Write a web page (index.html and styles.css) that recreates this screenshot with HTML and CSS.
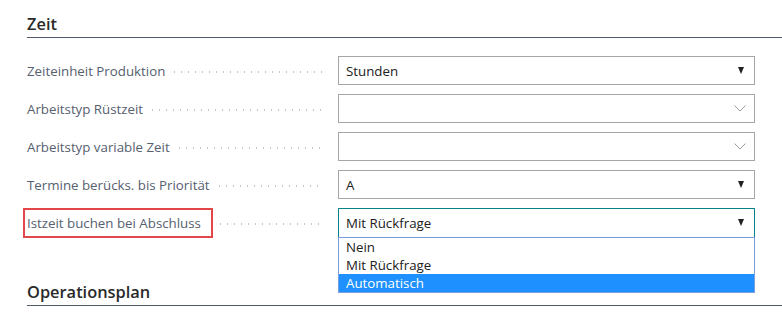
FILE: index.html
```html
<!DOCTYPE html>
<html lang="de">
<head>
    <meta charset="UTF-8">
    <title>Zeit</title>
    <link rel="stylesheet" href="styles.css">
</head>
<body>
    <div class="page">
        <section class="group">
            <h2 class="group-title">Zeit</h2>
            <div class="field-row">
                <label class="field-label"><span>Zeiteinheit Produktion</span></label>
                <div class="field-box">
                    <span class="field-value">Stunden</span>
                    <span class="arrow-solid"></span>
                </div>
            </div>
            <div class="field-row">
                <label class="field-label"><span>Arbeitstyp Rüstzeit</span></label>
                <div class="field-box">
                    <span class="field-value"></span>
                    <svg class="chevron" width="12" height="7" viewBox="0 0 12 7"><path d="M0.5 0.5 L6 6 L11.5 0.5" fill="none" stroke="#9a9a9a" stroke-width="1"/></svg>
                </div>
            </div>
            <div class="field-row">
                <label class="field-label"><span>Arbeitstyp variable Zeit</span></label>
                <div class="field-box">
                    <span class="field-value"></span>
                    <svg class="chevron" width="12" height="7" viewBox="0 0 12 7"><path d="M0.5 0.5 L6 6 L11.5 0.5" fill="none" stroke="#9a9a9a" stroke-width="1"/></svg>
                </div>
            </div>
            <div class="field-row">
                <label class="field-label"><span>Termine berücks. bis Priorität</span></label>
                <div class="field-box">
                    <span class="field-value">A</span>
                    <span class="arrow-solid"></span>
                </div>
            </div>
            <div class="field-row">
                <label class="field-label"><span class="marked">Istzeit buchen bei Abschluss</span></label>
                <div class="field-box is-open">
                    <span class="field-value">Mit Rückfrage</span>
                    <span class="arrow-solid"></span>
                    <ul class="option-list">
                        <li>Nein</li>
                        <li>Mit Rückfrage</li>
                        <li class="selected">Automatisch</li>
                    </ul>
                </div>
            </div>
        </section>
        <section class="group next">
            <h2 class="group-title">Operationsplan</h2>
        </section>
    </div>
</body>
</html>
```

FILE: styles.css
```css
body {
    margin: 0;
    background: #ffffff;
    font-family: "Open Sans", "Noto Sans", sans-serif;
    overflow: hidden;
}

.page {
    padding: 11px 0 0 27px;
}

.group-title {
    margin: 0;
    font-size: 16.4px;
    font-weight: 600;
    color: #2a2a2a;
    line-height: 25px;
    padding-bottom: 1px;
    border-bottom: 1px solid #505a66;
}

.group > .field-row:first-of-type {
    margin-top: 18px;
}

.field-row {
    display: flex;
    align-items: center;
    height: 29px;
    margin-bottom: 9px;
}

.field-label {
    width: 311px;
    flex: none;
    font-size: 13.3px;
    color: #56606f;
    display: flex;
    align-items: center;
    white-space: nowrap;
    padding-right: 14px;
    box-sizing: border-box;
}

.field-label span {
    flex: none;
}

.field-label::after {
    content: "";
    flex: 1;
    height: 2px;
    margin-left: 6px;
    margin-top: 3px;
    background-image: radial-gradient(circle, #c4c8cd 0.8px, transparent 1px);
    background-size: 7px 2px;
    background-repeat: repeat-x;
}

.marked {
    outline: 2px solid #e4474a;
    padding: 4px 10px 4px 2px;
    margin-left: -2px;
}

.field-box {
    position: relative;
    width: 417px;
    height: 29px;
    box-sizing: border-box;
    border: 1px solid #a6a6a6;
    display: flex;
    align-items: center;
    justify-content: space-between;
    padding: 0 8px 0 7px;
}

.field-box.is-open {
    border-color: #038387;
    height: 30px;
}

.field-value {
    font-size: 13.3px;
    color: #212121;
}

.arrow-solid {
    width: 0;
    height: 0;
    border-left: 3px solid transparent;
    border-right: 3px solid transparent;
    border-top: 7px solid #212121;
    margin-right: 2px;
}

.option-list {
    position: absolute;
    left: -1px;
    top: 28px;
    width: 417px;
    box-sizing: border-box;
    margin: 0;
    padding: 0;
    list-style: none;
    background: #ffffff;
    border: 1px solid #7a9fdc;
    z-index: 2;
}

.option-list li {
    font-size: 13.3px;
    line-height: 18px;
    padding-left: 7px;
    color: #212121;
}

.option-list li.selected {
    background: #1e90ff;
    color: #ffffff;
}

.group.next {
    margin-top: 42px;
}
```
